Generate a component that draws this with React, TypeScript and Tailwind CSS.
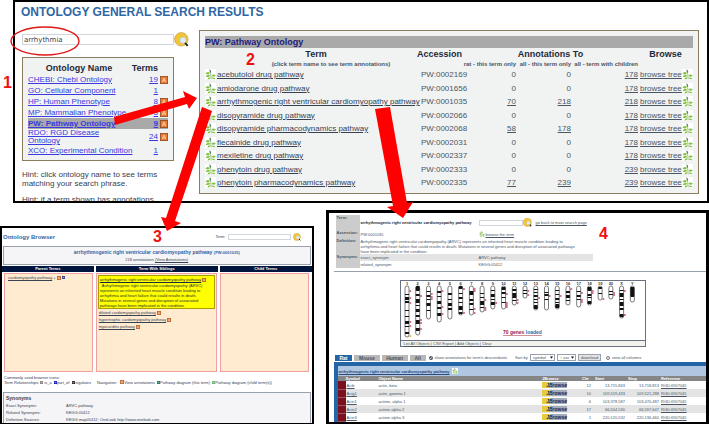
import React from 'react';
import clsx from 'clsx';

const ontologies = [
  { name: 'CHEBI: Chebi Ontology', terms: 19, annotated: true },
  { name: 'GO: Cellular Component', terms: 1, annotated: false },
  { name: 'HP: Human Phenotype', terms: 8, annotated: true },
  { name: 'MP: Mammalian Phenotype', terms: 3, annotated: true },
  { name: 'PW: Pathway Ontology', terms: 9, annotated: true, selected: true },
  { name: 'RDO: RGD Disease Ontology', terms: 24, annotated: true, wrap: true },
  { name: 'XCO: Experimental Condition', terms: 1, annotated: false },
];

const pathways = [
  { term: 'acebutolol drug pathway', acc: 'PW:0002169', rat: 0, all: 0, children: 178 },
  { term: 'amiodarone drug pathway', acc: 'PW:0001656', rat: 0, all: 0, children: 178 },
  { term: 'arrhythmogenic right ventricular cardiomyopathy pathway', acc: 'PW:0001035', rat: 70, all: 218, children: 218 },
  { term: 'disopyramide drug pathway', acc: 'PW:0002066', rat: 0, all: 0, children: 178 },
  { term: 'disopyramide pharmacodynamics pathway', acc: 'PW:0002068', rat: 58, all: 178, children: 178 },
  { term: 'flecainide drug pathway', acc: 'PW:0002031', rat: 0, all: 0, children: 178 },
  { term: 'mexiletine drug pathway', acc: 'PW:0002337', rat: 0, all: 0, children: 178 },
  { term: 'phenytoin drug pathway', acc: 'PW:0002333', rat: 0, all: 0, children: 239 },
  { term: 'phenytoin pharmacodynamics pathway', acc: 'PW:0002335', rat: 77, all: 239, children: 239 },
];

const genes = [
  { symbol: 'Actb', name: 'actin, beta', chr: '12', start: '13,715,843', stop: '13,718,813' },
  { symbol: 'Actg1', name: 'actin, gamma 1', chr: '10', start: '109,519,433', stop: '109,521,288' },
  { symbol: 'Actn1', name: 'actinin, alpha 1', chr: '6', start: '103,378,587', stop: '103,470,487' },
  { symbol: 'Actn2', name: 'actinin alpha 2', chr: '17', start: '66,504,530', stop: '66,597,647' },
  { symbol: 'Actn3', name: 'actinin alpha 3', chr: '1', start: '220,120,532', stop: '220,136,460' },
];

interface Chromosome {
  name: string;
  length: number;
  bands: [number, number][];
  marks: number[];
}

const chromosomes: Chromosome[] = [
  { name: '1', length: 51, bands: [[8, 1], [11, 3], [15, 2], [24, 1], [30, 1], [35, 3], [40, 1], [46, 2]], marks: [5, 12, 17, 36, 40] },
  { name: '2', length: 49, bands: [[0, 5], [8, 2], [13, 4], [19, 1], [23, 3], [29, 2], [34, 4], [42, 3]], marks: [10, 34, 37, 43] },
  { name: '3', length: 33, bands: [[5, 1], [9, 2], [13, 1], [17, 3], [24, 1]], marks: [8, 11, 13] },
  { name: '4', length: 36, bands: [[5, 2], [10, 1], [15, 3], [21, 2], [27, 3]], marks: [5, 21, 28] },
  { name: '5', length: 33, bands: [[7, 2], [13, 1], [17, 3], [22, 2]], marks: [] },
  { name: '6', length: 29, bands: [[0, 3], [7, 1], [11, 2], [16, 1], [20, 4], [26, 2]], marks: [3, 27] },
  { name: '7', length: 29, bands: [[5, 4], [13, 2], [17, 2], [23, 1]], marks: [3, 5, 23, 27] },
  { name: '8', length: 26, bands: [[7, 1], [11, 1], [15, 4], [21, 1]], marks: [14, 22, 24] },
  { name: '9', length: 23, bands: [[4, 1], [8, 3], [13, 1], [16, 3]], marks: [17] },
  { name: '10', length: 23, bands: [[1, 3], [6, 2], [11, 1], [16, 1]], marks: [8, 17, 19, 21] },
  { name: '11', length: 19, bands: [[3, 2], [7, 5], [14, 1]], marks: [14, 17] },
  { name: '12', length: 12, bands: [[4, 1], [7, 1]], marks: [5, 9] },
  { name: '13', length: 24, bands: [[3, 1], [6, 1], [9, 2], [13, 1], [16, 1], [19, 4]], marks: [12] },
  { name: '14', length: 24, bands: [[6, 1], [8, 2], [13, 1]], marks: [10] },
  { name: '15', length: 23, bands: [[4, 1], [8, 1], [12, 2], [16, 1], [18, 4]], marks: [10] },
  { name: '16', length: 19, bands: [[5, 2], [9, 3], [14, 1]], marks: [3] },
  { name: '17', length: 21, bands: [[5, 1], [9, 2], [13, 1]], marks: [7, 14, 16] },
  { name: '18', length: 19, bands: [[1, 4], [8, 2], [11, 1], [15, 3]], marks: [5, 7] },
  { name: '19', length: 14, bands: [[1, 2], [7, 1]], marks: [13] },
  { name: '20', length: 13, bands: [[5, 1], [8, 1]], marks: [7, 9] },
  { name: 'X', length: 32, bands: [[4, 1], [7, 4], [13, 1], [16, 4], [22, 2], [28, 3]], marks: [5, 29] },
  { name: 'Y', length: 16, bands: [[1, 10]], marks: [] },
];

const Leaf: React.FC<{ className?: string }> = ({ className }) => (
  <svg viewBox="0 0 12 12" className={clsx('inline-block shrink-0 bg-white', className)} aria-hidden="true">
    <path d="M5.4 0.8 C6.3 3.5 6.2 6 6.8 11.4" fill="none" stroke="#6f9a6a" strokeWidth="0.7" />
    <path d="M5 0.2 L6.8 2.4 L6.3 4.4 L5.2 3 Z" fill="#57806a" />
    <path d="M0.5 5 Q2 2 5.6 4 Q4 7.4 0.5 5 Z M0.6 8.4 Q2.6 5.4 5.6 6.8 Q4.6 9.8 0.6 8.4 Z M2.6 11.4 Q3.2 8.6 6 9 Q5.8 11.8 2.6 11.4 Z" fill="#86c440" />
    <path d="M7 7.4 Q9 4.6 11.8 7 Q10 9.6 7 7.4 Z M7.2 9.6 Q9.8 8.4 11.6 11 Q8.8 12 7.2 9.6 Z" fill="#86c440" />
  </svg>
);

const SearchIcon: React.FC<{ className?: string }> = ({ className }) => (
  <svg viewBox="0 0 16 16" className={clsx('block', className)} aria-hidden="true">
    <circle cx="7.8" cy="7.8" r="7.2" fill="#f3c436" stroke="#c79a5a" strokeWidth="0.7" />
    <path d="M11.6 11.4 L14.6 14.8" stroke="#222" strokeWidth="2" />
    <circle cx="9.6" cy="8.8" r="3.3" fill="#dbeefa" stroke="#b4c6d2" strokeWidth="0.7" />
  </svg>
);

const AnnotIcon: React.FC<{ small?: boolean }> = ({ small }) => (
  <svg viewBox="0 0 8 8" className={clsx('inline-block align-middle', small ? 'w-[4px] h-[4px]' : 'w-[8px] h-[8px]')} aria-hidden="true">
    <rect x="0.4" y="0.4" width="7.2" height="7.2" fill="#ee7a30" stroke="#8c4a20" strokeWidth="0.8" />
    <path d="M2.3 6 L4 2 L5.7 6 M2.9 4.8 H5.1" fill="none" stroke="#fbd9bd" strokeWidth="0.8" />
  </svg>
);

const Square: React.FC<{ color: string }> = ({ color }) => (
  <svg viewBox="0 0 4 4" className="inline-block align-middle w-[3px] h-[3px]" aria-hidden="true">
    <rect width="4" height="4" fill={color} />
    <path d="M1 2 H3" stroke="#fff" strokeWidth="0.6" />
  </svg>
);

const OntologyList = () => (
  <div className="w-[158px] shrink-0 pl-[6px] pt-[2px]">
    <input
      aria-label="Search phrase"
      defaultValue="arrhythmia"
      className="block w-full h-[11px] border border-gray-300 bg-white pl-px text-[7px] leading-[9px] text-gray-700 font-['DejaVu_Sans',sans-serif]"
    />
    <div className="mt-[12px] border border-[#8b7d5b] bg-[#f1f3f3] px-[5px] pt-[4px] pb-[4px]">
      <table className="w-full table-fixed text-[8px] leading-[8px] text-[#3a3ae0]">
        <colgroup>
          <col />
          <col className="w-[28px]" />
          <col className="w-[10px]" />
        </colgroup>
        <thead>
          <tr className="h-[12px] text-[9px] leading-[12px] text-gray-800">
            <th className="p-0 font-bold">Ontology Name</th>
            <th className="p-0 font-bold text-right">Terms</th>
            <th className="p-0" aria-label="Annotations" />
          </tr>
        </thead>
        <tbody>
          {ontologies.map((o) => (
            <tr key={o.name} className={clsx('h-[11px]', o.selected && 'bg-[#a9a9a9] font-bold')}>
              <td className="p-0">
                <a href="#" className={clsx('underline block', o.wrap ? 'w-[80px]' : 'whitespace-nowrap')}>{o.name}</a>
              </td>
              <td className="p-0 text-right">
                <a href="#" className="underline">{o.terms}</a>
              </td>
              <td className="p-0 leading-[0] text-right">{o.annotated && <AnnotIcon />}</td>
            </tr>
          ))}
        </tbody>
      </table>
    </div>
    <div className="mt-[9px] text-[8px] leading-[9px] text-gray-700">
      <p>Hint: click ontology name to see terms matching your search phrase.</p>
      <p className="mt-[7px] whitespace-nowrap">Hint: if a term shown has annotations</p>
    </div>
  </div>
);

const Count: React.FC<{ value: number }> = ({ value }) =>
  value > 0 ? <a href="#" className="underline">{value}</a> : <>{value}</>;

const PathwayResults = () => (
  <div className="flex-1 min-w-0 border border-[#8b7d5b] bg-[#f1f3f3] px-[5px] pt-[5px] pb-[4px]">
    <h2 className="bg-[#a9a9a9] text-[9px] leading-[12px] font-bold text-[#1c1c80]">PW: Pathway Ontology</h2>
    <table className="w-full table-fixed text-[8px] leading-[13px] text-gray-600">
      <colgroup>
        <col />
        <col className="w-[50px]" />
        <col className="w-[53px]" />
        <col className="w-[55px]" />
        <col className="w-[67px]" />
        <col className="w-[55px]" />
      </colgroup>
      <thead className="text-gray-800">
        <tr className="text-[9px] leading-[12px]">
          <th className="p-0 pl-[14px]">Term</th>
          <th className="p-0 pl-[4px] text-left">Accession</th>
          <th className="p-0" colSpan={3}>Annotations To</th>
          <th className="p-0">Browse</th>
        </tr>
        <tr className="text-[6px] leading-[8px] text-gray-600 whitespace-nowrap">
          <th className="p-0 pl-[44px]">(click term name to see term annotations)</th>
          <th className="p-0" />
          <th className="p-0 text-right">rat - this term only</th>
          <th className="p-0 text-right">all - this term only</th>
          <th className="p-0 text-right">all - term with children</th>
          <th className="p-0" />
        </tr>
      </thead>
      <tbody>
        {pathways.map((p) => (
          <tr key={p.acc} className="odd:h-[13px] even:h-[14px] whitespace-nowrap">
            <td className="p-0">
              <div className="flex items-center gap-px">
                <Leaf className="w-[11px] h-[11px]" />
                <a href="#" className="underline text-gray-700">{p.term}</a>
              </div>
            </td>
            <td className="p-0 pl-[8px]">{p.acc}</td>
            <td className="p-0 text-right"><Count value={p.rat} /></td>
            <td className="p-0 text-right"><Count value={p.all} /></td>
            <td className="p-0 text-right"><Count value={p.children} /></td>
            <td className="p-0">
              <div className="flex items-center justify-between pl-[2px]">
                <a href="#" className="underline">browse tree</a>
                <Leaf className="w-[11px] h-[11px]" />
              </div>
            </td>
          </tr>
        ))}
      </tbody>
    </table>
  </div>
);

const columnBody = 'border border-[#f0a0a0] bg-[#ffebd0]';

const OntologyBrowser = () => (
  <section className="mt-[16px] flex-[314] min-w-0 flex flex-col border-2 border-black bg-white text-[4px] leading-[6px] text-gray-700">
    <div className="flex items-center justify-between h-[18px] pl-px pr-[11px]">
      <h2 className="text-[6px] font-bold text-[#2f66a5]">Ontology Browser</h2>
      <div className="flex items-center gap-[2px]">
        <label htmlFor="browser-term">Term:</label>
        <input id="browser-term" className="w-[63px] h-[6px] border border-gray-300" />
        <button aria-label="Search"><SearchIcon className="w-[8px] h-[8px]" /></button>
      </div>
    </div>
    <div className="mx-px border border-gray-400 bg-[#f5f5f7] h-[19px] pt-[2px] text-center">
      <p className="text-[5px] leading-[7px] font-bold text-[#2f66a5]">
        arrhythmogenic right ventricular cardiomyopathy pathway <span className="text-[4px]">(PW:0001035)</span>
      </p>
      <p className="leading-[7px]">218 annotations <a href="#" className="underline">(View Annotations)</a></p>
    </div>
    <div className="flex gap-[2px] mt-px text-center font-bold text-white">
      <div className="flex-[92] bg-[#00153d]">Parent Terms</div>
      <div className="flex-[123] bg-[#00153d]">Term With Siblings</div>
      <div className="flex-[92] bg-[#00153d]">Child Terms</div>
    </div>
    <div className="flex-1 flex gap-[3px] px-[2px] pt-px">
      <div className={clsx(columnBody, 'flex-[88] pl-[3px] pt-px')}>
        <a href="#" className="underline">cardiomyopathy pathway</a> + <AnnotIcon small /> <Square color="#3a4a9a" />
      </div>
      <div className={clsx(columnBody, 'flex-[123] min-w-0 px-px pt-px')}>
        <div className="border border-[#a8a000] bg-[#ffff00] min-h-[33px] pl-px pt-px text-gray-800">
          <p className="whitespace-nowrap">
            <a href="#" className="underline">arrhythmogenic right ventricular cardiomyopathy pathway</a> <AnnotIcon small />
          </p>
          <p className="leading-[5px]">
            &nbsp; Arrhythmogenic right ventricular cardiomyopathy (ARVC) represents
            an inherited heart muscle condition leading to arrhythmia and heart
            failure that could results in death. Mutations in several genes and
            disruption of associated pathways have been implicated in the
            condition.
          </p>
        </div>
        <ul className="pl-px leading-[7px]">
          <li><a href="#" className="underline">dilated cardiomyopathy pathway</a> <AnnotIcon small /></li>
          <li><a href="#" className="underline">hypertrophic cardiomyopathy pathway</a> <AnnotIcon small /></li>
          <li><a href="#" className="underline">myocarditis pathway</a> <AnnotIcon small /></li>
        </ul>
      </div>
      <div className={clsx(columnBody, 'flex-[92]')} />
    </div>
    <div className="pl-[2px] pt-[3px] leading-[5px] whitespace-nowrap">
      <p>Commonly used browser icons:</p>
      <div className="flex">
        <p className="w-[93px]">
          Term Relationships: <Square color="#888" /> is_a &nbsp;<Square color="#2020c0" />part_of &nbsp;<Square color="#333" />regulates
        </p>
        <p>
          Navigation: &nbsp; <AnnotIcon small />View annotations &nbsp;<Square color="#20805a" />Pathway diagram (this term) &nbsp;<Square color="#7fae7f" />Pathway diagram (child term(s))
        </p>
      </div>
    </div>
    <div className="mt-[7px] mx-px border border-b-0 border-gray-400 bg-[#f5f5f7] pl-[2px] pt-[2px] leading-[7px]">
      <h3 className="text-[5px] font-bold">Synonyms</h3>
      <dl className="grid grid-cols-[60px_1fr]">
        <dt>Exact Synonyms:</dt><dd>ARVC pathway</dd>
        <dt>Related Synonyms:</dt><dd>KEGG:05412</dd>
        <dt>Definition Sources:</dt><dd>KEGG map05412; OneLook http://www.onelook.com</dd>
      </dl>
    </div>
  </section>
);

const Karyotype = () => (
  <div className="w-[246px] border border-gray-500 bg-white">
    <svg viewBox="0 0 244 59" className="block w-full h-[59px]">
      {chromosomes.map((c, i) => {
        const x = 6 + i * 10.73;
        return (
          <g key={c.name}>
            <text x={x} y="4" textAnchor="middle" fontSize="4" fontWeight="bold" fill="#333">{c.name}</text>
            <rect x={x - 2} y="5" width="4" height={c.length} rx="2" fill="#fff" />
            {c.bands.map(([y, h]) => (
              <rect key={y} x={x - 2} y={5 + y} width="4" height={h} rx={y < 2 || y + h > c.length - 2 ? 1 : 0} fill="#111" />
            ))}
            <rect x={x - 2} y="5" width="4" height={c.length} rx="2" fill="none" stroke="#222" strokeWidth="0.6" />
            {c.marks.map((m) => (
              <rect key={m} x={x + 2.4} y={4.4 + m} width="1.8" height="1.2" fill="#b02040" />
            ))}
          </g>
        );
      })}
      <rect x="8.4" y="54.4" width="2" height="1.4" fill="#e0b400" />
      <text x="102" y="53" fontSize="5" fontWeight="bold" fill="#a02030" textDecoration="underline">
        70 genes <tspan fill="#2f66a5">loaded</tspan>
      </text>
    </svg>
    <div className="border-t border-gray-500 bg-[#f3f3ee] pl-[3px] leading-[5px] underline">
      List All Objects | CSV Export | Add Objects | Clear
    </div>
  </div>
);

const JBrowse = () => (
  <a href="#" className="flex w-[25px] h-[6px] items-center bg-[linear-gradient(100deg,#e8cb3c_30%,#a3adba_32%)]">
    <span className="w-full text-right text-[5px] leading-[6px] italic font-bold text-[#15275c]">JBrowse</span>
  </a>
);

const MiniSelect: React.FC<{ id?: string; label?: string; value: string }> = ({ id, label, value }) => (
  <span className="relative flex w-full">
    <select id={id} aria-label={label} className="appearance-none w-full h-[7px] border border-gray-400 bg-white pl-[2px] text-[4px] leading-[5px]">
      <option>{value}</option>
    </select>
    <svg viewBox="0 0 4 3" className="absolute right-[2px] top-[2px] w-[3px] h-[3px]" aria-hidden="true">
      <path d="M0 0 H4 L2 3 Z" fill="#111" />
    </svg>
  </span>
);

const labelCell = 'p-0 pl-px w-[24px] bg-[#cccccc] font-bold text-left align-top';

const TermReport = () => (
  <section className="flex-[383] min-w-0 flex flex-col border-[3px] border-black bg-white text-[4px] leading-[5px] text-gray-600">
    <table className="ml-[7px] mt-[2px] w-[257px] table-fixed whitespace-nowrap">
      <colgroup>
        <col className="w-[24px]" />
        <col className="w-[119px]" />
        <col />
      </colgroup>
      <tbody>
        <tr className="h-[15px]">
          <th className={labelCell}>Term:</th>
          <td className="p-0 pl-px font-bold text-gray-800">arrhythmogenic right ventricular cardiomyopathy pathway</td>
          <td className="p-0">
            <div className="flex items-center">
              <input aria-label="Term" className="w-[44px] h-[6px] border border-gray-300" />
              <button aria-label="Search"><SearchIcon className="w-[9px] h-[9px]" /></button>
              <a href="#" className="underline ml-[4px]">go back to main search page</a>
            </div>
          </td>
        </tr>
        <tr className="h-[8px]">
          <th className={labelCell}>Accession:</th>
          <td className="p-0 pl-px">PW:0001035</td>
          <td className="p-0">
            <div className="flex items-center gap-px">
              <Leaf className="w-[6px] h-[6px]" />
              <a href="#" className="underline">browse the term</a>
            </div>
          </td>
        </tr>
        <tr className="h-[16px]">
          <th className={labelCell}>Definition:</th>
          <td className="p-0 pl-px" colSpan={2}>
            Arrhythmogenic right ventricular cardiomyopathy (ARVC) represents an inherited heart muscle condition leading to<br />
            arrhythmia and heart failure that could results in death. Mutations in several genes and disruption of associated pathways<br />
            have been implicated in the condition.
          </td>
        </tr>
        <tr className="h-[7px]">
          <th className={labelCell}>Synonyms:</th>
          <td className="p-0 pl-px bg-[#e4e4e4]">exact_synonym:</td>
          <td className="p-0 bg-[#e4e4e4]">ARVC pathway</td>
        </tr>
        <tr className="h-[7px]">
          <th className={labelCell} />
          <td className="p-0 pl-px">related_synonym:</td>
          <td className="p-0">KEGG:05412</td>
        </tr>
      </tbody>
    </table>
    <hr className="ml-[5px] mt-[3px] border-gray-400" />
    <div className="ml-[71px] mt-[8px]">
      <Karyotype />
    </div>
    <div className="mt-[7px] ml-[6px] flex items-center h-[7px] whitespace-nowrap">
      <div className="flex w-[94px] pr-[3px] gap-[2px] font-bold leading-[6px] text-[5px]">
        <button className="flex-[17] bg-[#2465a5] text-white">Rat</button>
        <button className="flex-[24] bg-[#b8b8b8]">Mouse</button>
        <button className="flex-[25] bg-[#b8b8b8]">Human</button>
        <button className="flex-[15] bg-[#b8b8b8]">All</button>
      </div>
      <label className="flex items-center gap-[2px]">
        <input type="checkbox" defaultChecked className="w-[4px] h-[4px] accent-gray-600" />
        show annotations for term's descendants
      </label>
      <label htmlFor="sort-by" className="ml-[8px] w-[14px]">Sort by</label>
      <span className="ml-px w-[25px]"><MiniSelect id="sort-by" value="symbol" /></span>
      <span className="ml-[2px] w-[19px]"><MiniSelect label="Sort order" value="↑ asc" /></span>
      <button className="ml-[2px] w-[23px] border border-gray-400 bg-[#e4e4e4] text-[4px] leading-[5px]">download</button>
      <label className="ml-[5px] flex items-center gap-[2px]">
        <input type="checkbox" className="w-[4px] h-[4px]" />
        view all columns
      </label>
    </div>
    <div className="flex-1 mt-px ml-[5px] border-t-4 border-l-4 border-[#2465a5] bg-white">
      <div className="flex items-center gap-[3px] h-[10px] pl-px bg-[#b0c7e2]">
        <a href="#" className="underline font-bold text-[#2c4a7c]">arrhythmogenic right ventricular cardiomyopathy pathway</a>
        <Leaf className="w-[6px] h-[6px]" />
      </div>
      <table className="w-full table-fixed text-left">
        <colgroup>
          <col className="w-[8px]" />
          <col className="w-[33px]" />
          <col />
          <col className="w-[42px]" />
          <col className="w-[13px]" />
          <col className="w-[33px]" />
          <col className="w-[33px]" />
          <col className="w-[45px]" />
        </colgroup>
        <thead className="bg-[#858585] text-white">
          <tr>
            <th className="p-0" />
            <th className="p-0">Symbol</th>
            <th className="p-0">Object Name</th>
            <th className="p-0 pl-[2px]">JBrowse</th>
            <th className="p-0">Chr</th>
            <th className="p-0">Start</th>
            <th className="p-0">Stop</th>
            <th className="p-0">Reference</th>
          </tr>
        </thead>
        <tbody>
          {genes.map((g) => (
            <tr key={g.symbol} className="h-[8px] even:bg-[#e4e4e4]">
              <td className="p-0 bg-[#7a1020] border-b border-[#a05060]" />
              <td className="p-0 pl-px"><a href="#" className="underline">{g.symbol}</a></td>
              <td className="p-0">{g.name}</td>
              <td className="p-0 pl-[2px]"><JBrowse /></td>
              <td className="p-0 pr-[4px] text-right">{g.chr}</td>
              <td className="p-0 pr-[3px] text-right">{g.start}</td>
              <td className="p-0 pr-[2px] text-right">{g.stop}</td>
              <td className="p-0"><a href="#" className="underline">RGD:6907045</a></td>
            </tr>
          ))}
        </tbody>
      </table>
    </div>
  </section>
);

// Red arrows and the ring that lead from one step to the next
const Callouts = () => (
  <>
    <svg className="absolute left-0 top-0 w-[709px] h-[424px] pointer-events-none" viewBox="0 0 709 424" aria-hidden="true">
      <ellipse cx="45" cy="41" rx="34" ry="14" fill="none" stroke="#e01818" strokeWidth="1.4" />
      <g fill="#ff0000">
        <polygon points="114,117 185,97 183,91 197,98 189,109 187,104 115,125" />
        <polygon points="202,107 212,111 175,221 181,223 167,231 161,217 166,218" />
        <polygon points="375,109 390,107 407,203 413,202 403,218 387,207 393,206" />
      </g>
    </svg>
    <div className="pointer-events-none text-[16px] leading-[16px] font-bold text-[#ee1111]">
      <span className="absolute left-[3px] top-[75px]">1</span>
      <span className="absolute left-[246px] top-[52px]">2</span>
      <span className="absolute left-[153px] top-[229px]">3</span>
      <span className="absolute left-[599px] top-[226px]">4</span>
    </div>
  </>
);

export default function App() {
  return (
    <main className="relative min-h-screen flex flex-col bg-white overflow-hidden font-['Liberation_Sans',Arial,sans-serif]">
      <section className="ml-[13px] h-[203px] border-2 border-black overflow-hidden pl-px pr-[8px]">
        <h1 className="pl-[5px] pt-[2px] text-[12px] leading-[16px] font-bold text-[#2f66a5]">ONTOLOGY GENERAL SEARCH RESULTS</h1>
        <div className="flex items-start pt-[10px]">
          <div className="flex items-start mt-[2px]">
            <OntologyList />
            <button aria-label="Search">
              <SearchIcon className="w-[15px] h-[15px]" />
            </button>
          </div>
          <div className="flex-1 min-w-0 flex ml-[10px]">
            <PathwayResults />
          </div>
        </div>
      </section>
      <div className="flex-1 flex gap-[12px] pt-[7px]">
        <OntologyBrowser />
        <TermReport />
      </div>
      <Callouts />
    </main>
  );
}
